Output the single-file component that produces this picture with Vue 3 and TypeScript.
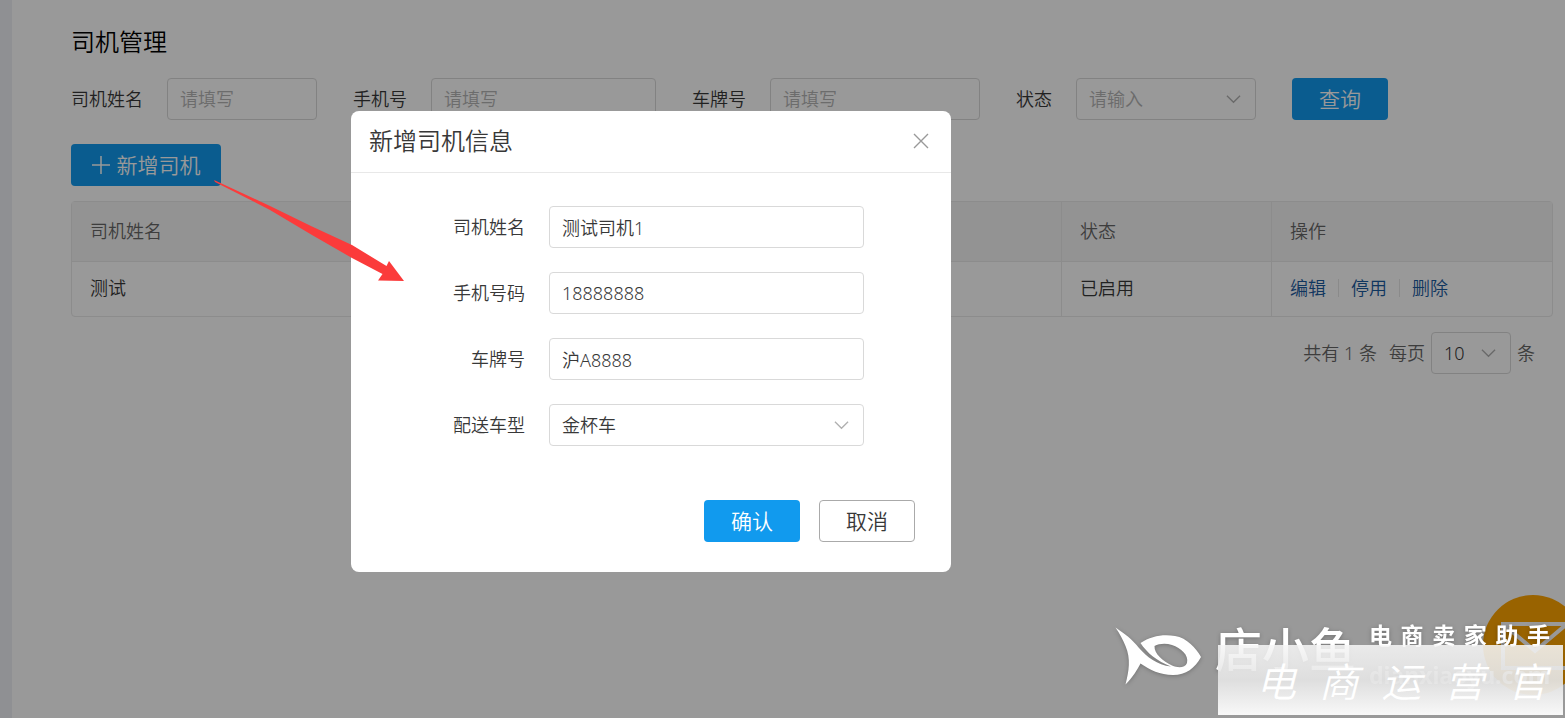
<script setup lang="ts">
import { reactive, ref } from 'vue'

interface Driver {
  name: string
  status: string
}

const filters = reactive({ name: '', phone: '', plate: '', status: '' })
const form = reactive({
  name: '测试司机1',
  phone: '18888888',
  plate: '沪A8888',
  vehicle: '金杯车',
})
const pageSize = ref('10')
const drivers: Driver[] = [{ name: '测试', status: '已启用' }]
const actions = ['编辑', '停用', '删除']
const tagline = [...'电商卖家助手']
const stamp = [...'电商运营官']
</script>

<template>
  <div class="app">
    <aside class="rail"></aside>
    <main class="page">
      <h1 class="title">司机管理</h1>

      <form class="filters" @submit.prevent>
        <div class="filter">
          <label for="f-name">司机姓名</label>
          <input id="f-name" v-model="filters.name" class="control w-name" placeholder="请填写" />
        </div>
        <div class="filter">
          <label for="f-phone">手机号</label>
          <input id="f-phone" v-model="filters.phone" class="control w-phone" placeholder="请填写" />
        </div>
        <div class="filter">
          <label for="f-plate">车牌号</label>
          <input id="f-plate" v-model="filters.plate" class="control w-plate" placeholder="请填写" />
        </div>
        <div class="filter">
          <label for="f-status">状态</label>
          <span class="select w-status">
            <select id="f-status" v-model="filters.status" class="control empty">
              <option value="">请输入</option>
            </select>
            <svg class="chevron" viewBox="0 0 16 10"><path d="M1 1.5 8 8.5 15 1.5" /></svg>
          </span>
        </div>
        <button class="btn primary" type="submit">查询</button>
      </form>

      <button class="btn primary add" type="button">
        <svg class="plus" viewBox="0 0 18 18"><path d="M9 0v18M0 9h18" /></svg>
        <span>新增司机</span>
      </button>

      <table class="table">
        <colgroup>
          <col />
          <col class="col-status" />
          <col class="col-actions" />
        </colgroup>
        <thead>
          <tr>
            <th>司机姓名</th>
            <th>状态</th>
            <th>操作</th>
          </tr>
        </thead>
        <tbody>
          <tr v-for="d in drivers" :key="d.name">
            <td>{{ d.name }}</td>
            <td>{{ d.status }}</td>
            <td>
              <div class="actions">
                <a v-for="a in actions" :key="a" href="#">{{ a }}</a>
              </div>
            </td>
          </tr>
        </tbody>
      </table>

      <div class="pager">
        <span class="total">共有 1 条</span>
        <label for="page-size">每页</label>
        <span class="select w-size">
          <select id="page-size" v-model="pageSize" class="control">
            <option>10</option>
          </select>
          <svg class="chevron" viewBox="0 0 16 10"><path d="M1 1.5 8 8.5 15 1.5" /></svg>
        </span>
        <span>条</span>
      </div>
    </main>

    <svg class="mail" viewBox="0 0 100 100">
      <circle cx="50" cy="50" r="50" />
      <path d="M20 29h64v44H20zM20 29l32 27 32-27" />
    </svg>

    <div class="mask"></div>

    <section class="modal" role="dialog" aria-labelledby="modal-title">
      <header class="modal-head">
        <h2 id="modal-title">新增司机信息</h2>
        <button class="close" type="button" aria-label="关闭">
          <svg viewBox="0 0 16 16"><path d="M1 1l14 14M15 1 1 15" /></svg>
        </button>
      </header>
      <form class="modal-form" @submit.prevent>
        <label for="m-name">司机姓名</label>
        <input id="m-name" v-model="form.name" class="control" />
        <label for="m-phone">手机号码</label>
        <input id="m-phone" v-model="form.phone" class="control" />
        <label for="m-plate">车牌号</label>
        <input id="m-plate" v-model="form.plate" class="control" />
        <label for="m-vehicle">配送车型</label>
        <span class="select">
          <select id="m-vehicle" v-model="form.vehicle" class="control">
            <option>金杯车</option>
          </select>
          <svg class="chevron" viewBox="0 0 16 10"><path d="M1 1.5 8 8.5 15 1.5" /></svg>
        </span>
      </form>
      <footer class="modal-foot">
        <button class="btn primary" type="button">确认</button>
        <button class="btn plain" type="button">取消</button>
      </footer>
    </section>

    <svg class="arrow" viewBox="0 0 192 104">
      <path d="M2 0 58 26 100 46.500 140 65 174.500 86 177 81 192 101 166 100.500 170.500 94 140 78 100 55 58 30 3 2Z" />
    </svg>

    <div class="brand">
      <svg class="fish" viewBox="0 0 120 90">
        <path
          fill-rule="evenodd"
          d="M10.500 17.500C20 24 27 29 34 38C42 47 52 55 66 56.500C52 51 42 43 35.500 33C46 26 58 24 70 26C82 28 91 38 96 47C90 58 81 65 68 65C55 65 45 60 35.500 53.500C32 60 28 67 20.500 74.500C24 61 26 49 20.500 36C18 30 15 24 10.500 17.500ZM49.500 36C49 44 58 51 67 55.500C73 58 80 58 82 53C84 45 76 38 67 35C61 33 54 33.500 49.500 36Z"
        />
      </svg>
      <span class="brand-name">店小鱼</span>
      <div class="brand-side">
        <span class="tagline"><b v-for="(c, i) in tagline" :key="i">{{ c }}</b></span>
        <span class="domain">dianxiaoyu.com</span>
      </div>
    </div>

    <div class="stamp"><span v-for="(c, i) in stamp" :key="i">{{ c }}</span></div>
  </div>
</template>

<style>
body {
  margin: 0;
  overflow: hidden;
}
</style>

<style scoped>
* {
  box-sizing: border-box;
}
.app {
  position: relative;
  display: flex;
  min-height: 100vh;
  overflow: hidden;
  background: #fff;
  color: #383838;
  font: 350 18px/24px "Noto Sans", "Noto Sans CJK SC", sans-serif;
}
button,
input,
select {
  font: inherit;
  color: inherit;
}
.rail {
  flex: none;
  width: 12px;
  background: #eff1f5;
}
.page {
  flex: 1;
  min-width: 0;
  padding: 24px 12px 24px 59px;
}
.title {
  margin: 0 0 18px;
  color: #000;
  font-size: 24px;
  font-weight: 350;
  line-height: 36px;
}
.filters {
  display: flex;
  align-items: center;
  gap: 36px;
}
.filter {
  display: flex;
  flex: none;
  align-items: center;
  gap: 24px;
}
.control {
  display: block;
  width: 100%;
  height: 42px;
  padding: 0 12px;
  border: 1px solid #d9d9d9;
  border-radius: 4px;
  outline: none;
  background: #fff;
  line-height: 24px;
  appearance: none;
}
.control::placeholder,
.control.empty {
  color: #b4b4b4;
  opacity: 1;
}
.control.w-name {
  width: 150px;
}
.control.w-phone {
  width: 225px;
}
.control.w-plate {
  width: 210px;
}
.select {
  position: relative;
  display: block;
}
.w-status {
  width: 180px;
}
.w-size {
  width: 80px;
}
.chevron {
  position: absolute;
  top: 16px;
  right: 15px;
  width: 15px;
  height: 10px;
  fill: none;
  stroke: #b0b0b0;
  stroke-width: 1.4;
  pointer-events: none;
}
.btn {
  display: flex;
  flex: none;
  align-items: center;
  justify-content: center;
  width: 96px;
  height: 42px;
  padding: 0;
  border: 0;
  border-radius: 4px;
  font-size: 21px;
  line-height: 30px;
  white-space: nowrap;
}
.primary {
  background: #119aee;
  color: #fff;
}
.plain {
  border: 1px solid #aaa;
  background: #fff;
}
.add {
  gap: 7px;
  width: 150px;
  margin: 24px 0 15px;
}
.plus {
  width: 18px;
  height: 18px;
  fill: none;
  stroke: #fff;
  stroke-width: 1.5;
}
.table {
  width: 100%;
  table-layout: fixed;
  border: 1px solid #e9e9e9;
  border-radius: 4px;
  border-spacing: 0;
}
.col-status {
  width: 210px;
}
.col-actions {
  width: 281px;
}
.table th,
.table td {
  padding: 0 18px 2px;
  text-align: left;
  font-weight: 350;
}
.table th {
  height: 60px;
  border-bottom: 1px solid #e9e9e9;
  background: #f6f6f6;
  color: #666;
}
.table td {
  height: 54px;
}
.table th + th,
.table td + td {
  border-left: 1px solid #e9e9e9;
}
.actions {
  display: flex;
  align-items: center;
}
.actions a {
  color: #1a5a9e;
  text-decoration: none;
}
.actions a + a {
  display: flex;
  align-items: center;
}
.actions a + a::before {
  width: 1px;
  height: 18px;
  margin: 0 12px;
  background: #e6e6e6;
  content: "";
}
.pager {
  display: flex;
  align-items: center;
  justify-content: flex-end;
  gap: 6px;
  padding: 15px 18px 0 0;
  color: #666;
}
.pager .control {
  color: #333;
}
.total {
  margin-right: 6px;
}
.mail {
  position: absolute;
  right: -18px;
  bottom: 23px;
  width: 100px;
  height: 100px;
  fill: #ffa500;
}
.mail path {
  fill: none;
  stroke: #fff;
  stroke-width: 4;
}
.mask {
  position: absolute;
  inset: 0;
  background: rgba(0, 0, 0, 0.4);
}
.modal {
  position: absolute;
  top: 111px;
  left: 351px;
  width: 600px;
  border-radius: 8px;
  background: #fff;
}
.modal-head {
  display: flex;
  align-items: center;
  justify-content: space-between;
  height: 62px;
  padding: 0 22px 2px 18px;
  border-bottom: 1px solid #e8e8e8;
}
.modal-head h2 {
  margin: 0;
  font-size: 24px;
  font-weight: 350;
  line-height: 36px;
}
.close {
  display: flex;
  padding: 0;
  border: 0;
  background: none;
}
.close svg {
  width: 16px;
  height: 16px;
  fill: none;
  stroke: #999;
  stroke-width: 1.4;
}
.modal-form {
  display: grid;
  grid-template-columns: 1fr 315px;
  gap: 24px;
  align-items: center;
  padding: 33px 87px 0 18px;
  text-align: right;
}
.modal-foot {
  display: flex;
  justify-content: flex-end;
  gap: 19px;
  padding: 54px 36px 30px;
}
.arrow {
  position: absolute;
  top: 180px;
  left: 212px;
  width: 192px;
  height: 104px;
  fill: #fb3b3b;
  pointer-events: none;
}
.brand {
  position: absolute;
  right: 15px;
  bottom: 18px;
  display: flex;
  align-items: center;
  height: 90px;
  color: #fff;
  font-weight: 700;
  filter: drop-shadow(0 1px 2px rgba(0, 0, 0, 0.25));
}
.fish {
  width: 120px;
  height: 90px;
  fill: #fff;
}
.brand-name {
  margin-right: 13px;
  margin-left: -10px;
  padding-bottom: 12px;
  font-size: 47px;
  font-weight: 500;
  line-height: 60px;
}
.brand-side {
  width: 181px;
  padding-top: 8px;
}
.tagline {
  display: flex;
  justify-content: space-between;
  font-size: 23px;
  line-height: 32px;
}
.tagline b {
  font-weight: 700;
}
.domain {
  display: block;
  font-size: 23px;
  line-height: 48px;
  text-align: center;
  opacity: 0.7;
}
.stamp {
  position: absolute;
  right: 2px;
  bottom: 3px;
  display: flex;
  align-items: center;
  justify-content: space-between;
  width: 345px;
  height: 70px;
  padding: 0 16px 0 38px;
  background: linear-gradient(rgba(246, 246, 246, 0.87), rgba(228, 228, 228, 0.92) 50%, rgba(253, 253, 253, 0.95));
  color: #fff;
  font-family: "Noto Sans CJK SC", sans-serif;
  font-size: 40px;
  font-style: italic;
  font-weight: 350;
  line-height: 60px;
}
</style>
